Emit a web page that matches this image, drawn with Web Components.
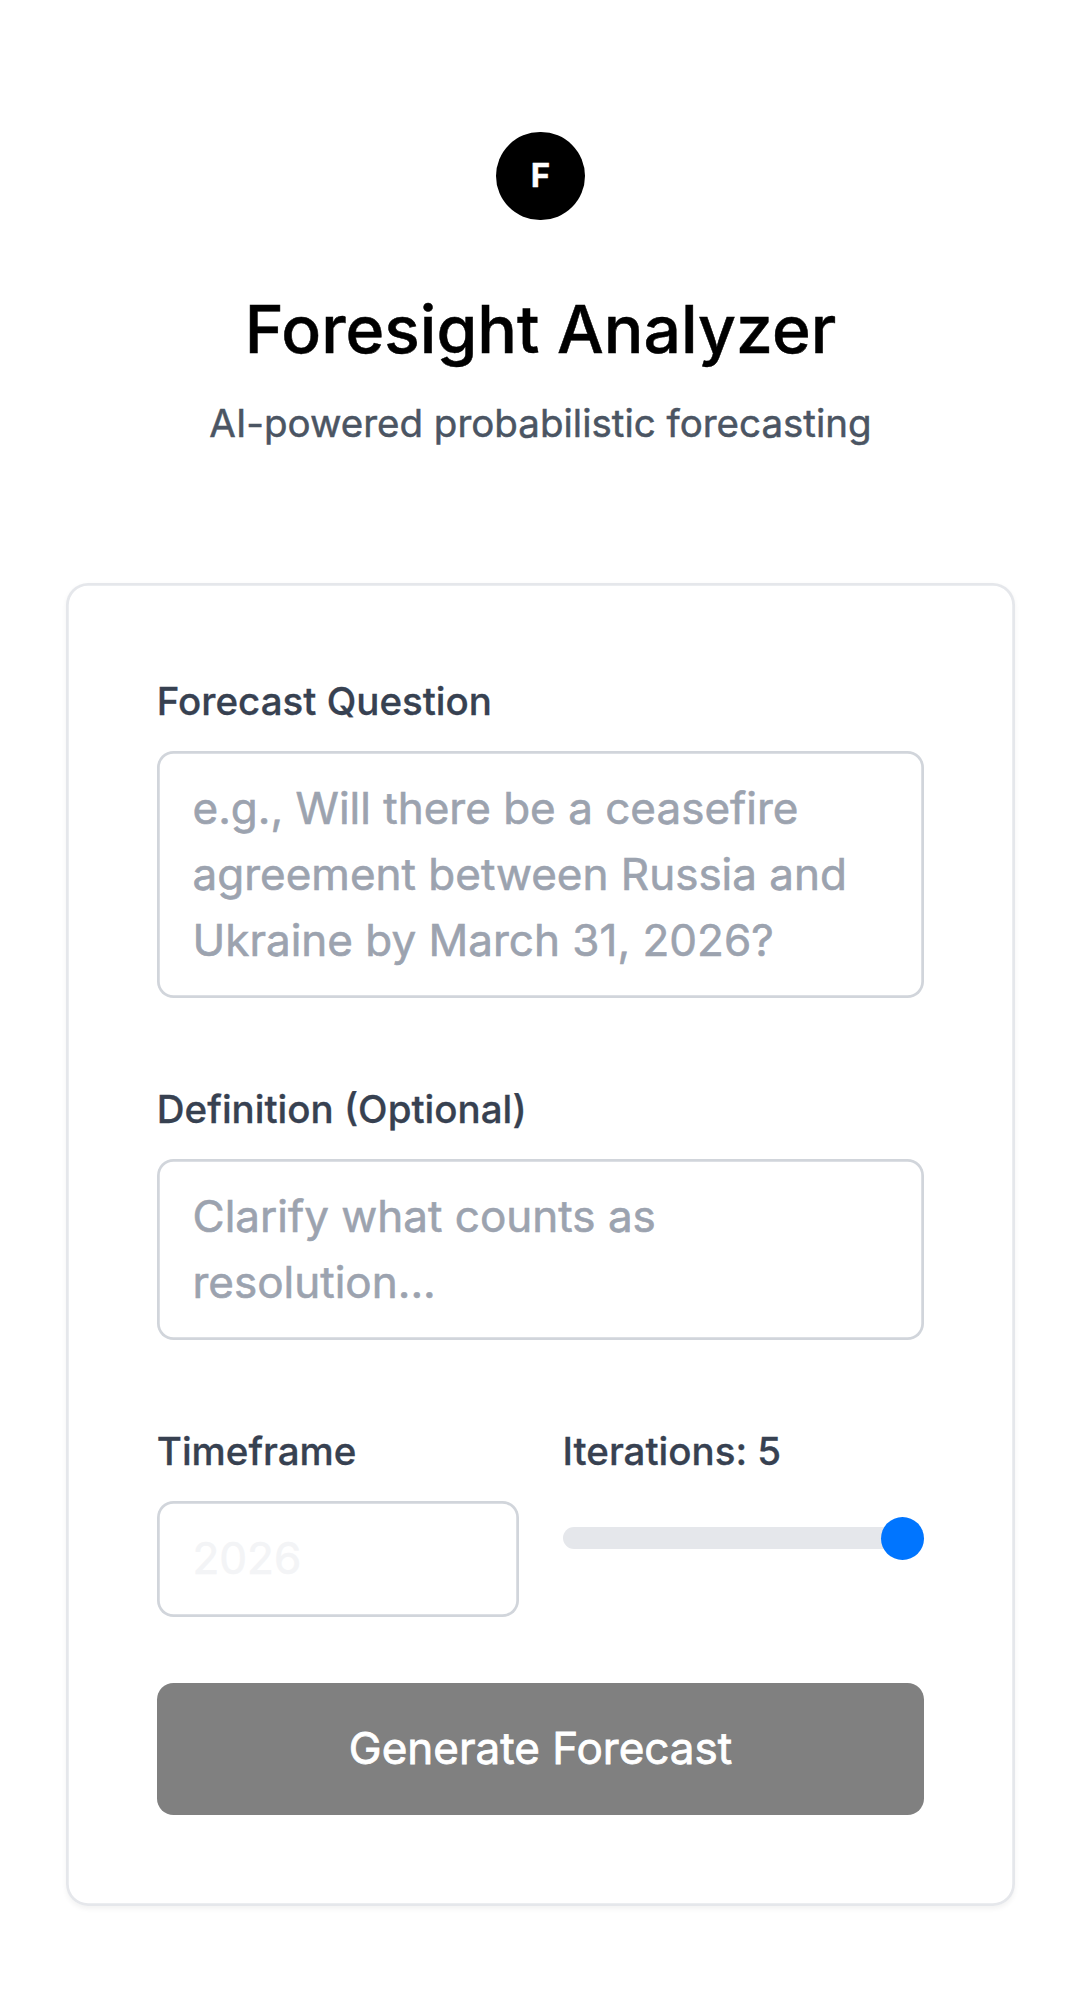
<!DOCTYPE html>
<html lang="en">
<head>
<meta charset="utf-8">
<title>Foresight Analyzer</title>
<style>
:root { --u: 2.7506px; }
body { margin: 0; background: #fff; color: #000; font-family: Inter, "Liberation Sans", sans-serif; min-height: 1999px; }
</style>
</head>
<body>
<foresight-app></foresight-app>
<script>
const define = (name, html) => {
  const t = document.createElement('template');
  t.innerHTML = html;
  customElements.define(name, class extends HTMLElement {
    constructor() {
      super();
      this.attachShadow({ mode: 'open' }).appendChild(t.content.cloneNode(true));
    }
  });
};

define('app-header', `
<style>
:host { display: flex; flex-direction: column; align-items: center; text-align: center; }
.logo { display: flex; align-items: center; justify-content: center; box-sizing: border-box; padding-bottom: 2px; width: calc(32*var(--u)); height: calc(32*var(--u)); border-radius: 50%; background: #000; color: #fff; font-weight: 700; font-size: calc(12*var(--u)); line-height: calc(16*var(--u)); margin-bottom: calc(24*var(--u) - 1px); -webkit-text-stroke: .4px; }
h1 { margin: 0 0 calc(8*var(--u) + 1px); font-weight: 500; font-size: calc(24*var(--u)); line-height: calc(32*var(--u)); -webkit-text-stroke: .5px; }
p { margin: 0; color: #4b5563; font-size: calc(14*var(--u)); line-height: calc(20*var(--u)); -webkit-text-stroke: .5px; }
</style>
<div class="logo">F</div>
<h1><slot name="title"></slot></h1>
<p><slot></slot></p>`);

define('form-card', `
<style>
:host { display: flex; flex-direction: column; box-sizing: border-box; padding: calc(33*var(--u)); border-radius: calc(8*var(--u)); background: #fff;
  box-shadow: inset 0 0 0 var(--u) #e5e7eb, 0 var(--u) calc(2*var(--u)) rgba(0,0,0,.05); }
</style>
<slot></slot>`);

define('form-field', `
<style>
:host { display: flex; flex-direction: column; }
label { color: #374151; font-weight: 500; font-size: calc(14*var(--u)); line-height: calc(20*var(--u)); margin-bottom: calc(8*var(--u)); -webkit-text-stroke: .3px; }
</style>
<label><slot name="label"></slot></label>
<slot></slot>`);

define('text-box', `
<style>
:host { display: block; box-sizing: border-box; padding: calc(9*var(--u) - 1px) calc(13*var(--u)) calc(9*var(--u) + 1px); border-radius: calc(6*var(--u)); background: #fff;
  box-shadow: inset 0 0 0 var(--u) #d1d5db; color: #9ca3af; font-size: calc(16*var(--u)); line-height: calc(24*var(--u)); -webkit-text-stroke: .6px; }
:host([faint]) { color: #f3f4f6; }
</style>
<slot></slot>`);

define('range-slider', `
<style>
:host { display: flex; align-items: center; justify-content: flex-end; height: calc(8*var(--u)); margin-top: calc(9.4*var(--u)); border-radius: calc(4*var(--u)); background: #e5e7eb; }
.thumb { flex: none; width: 43.2px; height: 43.2px; border-radius: 50%; background: #0075ff; }
</style>
<div class="thumb"></div>`);

define('submit-button', `
<style>
:host { display: block; }
button { display: block; box-sizing: border-box; width: 100%; height: calc(48*var(--u)); margin: 0; padding: 0 0 2px; border: 0; border-radius: calc(6*var(--u)); background: #808080; color: #fff; font: 400 calc(16*var(--u))/calc(24*var(--u)) Inter, sans-serif; -webkit-text-stroke: .8px; }
</style>
<button type="button"><slot></slot></button>`);

define('foresight-app', `
<style>
:host { display: flex; flex-direction: column; gap: calc(48*var(--u)); box-sizing: border-box; padding: calc(48*var(--u)) calc(24*var(--u)); }
.area { margin-bottom: calc(30.3*var(--u)); }
.area + .area { margin-bottom: calc(30.6*var(--u)); }
.row { display: grid; grid-template-columns: 1fr 1fr; gap: calc(16*var(--u)); margin-bottom: calc(24*var(--u)); }
</style>
<app-header><span slot="title">Foresight Analyzer</span>AI-powered probabilistic forecasting</app-header>
<form-card>
  <form-field class="area"><span slot="label">Forecast Question</span><text-box>e.g., Will there be a ceasefire agreement between Russia and Ukraine by March 31, 2026?</text-box></form-field>
  <form-field class="area"><span slot="label">Definition (Optional)</span><text-box>Clarify what counts as resolution...</text-box></form-field>
  <div class="row">
    <form-field><span slot="label">Timeframe</span><text-box faint>2026</text-box></form-field>
    <form-field><span slot="label">Iterations: 5</span><range-slider></range-slider></form-field>
  </div>
  <submit-button>Generate Forecast</submit-button>
</form-card>`);
</script>
</body>
</html>
